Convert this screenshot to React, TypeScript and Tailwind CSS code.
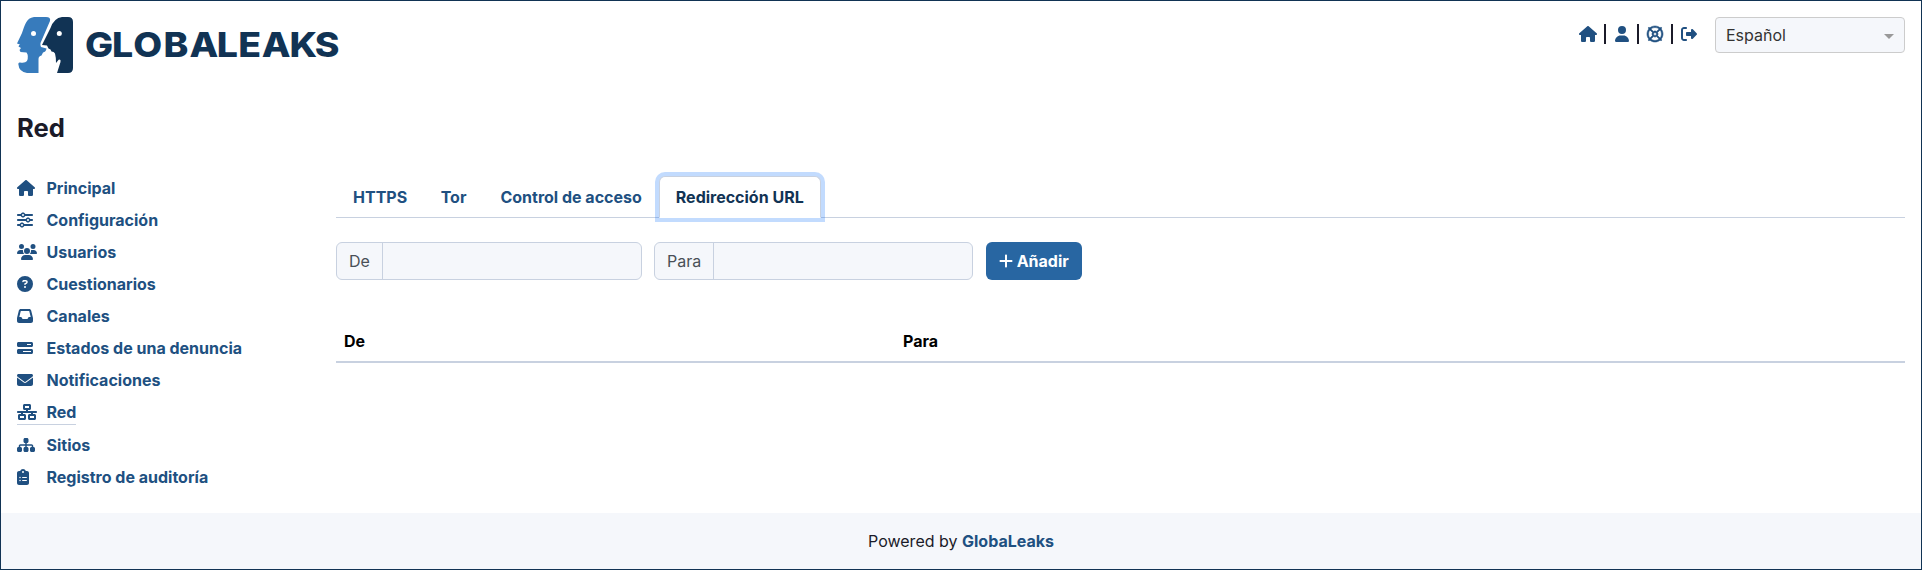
import React from "react";
import {
  FaHouse, FaUser, FaRegLifeRing, FaRightFromBracket, FaSliders, FaUsers, FaCircleQuestion,
  FaInbox, FaBarsProgress, FaEnvelope, FaNetworkWired, FaSitemap, FaClipboardList, FaPlus,
} from "react-icons/fa6";

const menu = [
  { label: "Principal", Icon: FaHouse, size: "h-4 w-[18px]" },
  { label: "Configuración", Icon: FaSliders, size: "size-4" },
  { label: "Usuarios", Icon: FaUsers, size: "h-4 w-5" },
  { label: "Cuestionarios", Icon: FaCircleQuestion, size: "size-4" },
  { label: "Canales", Icon: FaInbox, size: "size-4" },
  { label: "Estados de una denuncia", Icon: FaBarsProgress, size: "size-4" },
  { label: "Notificaciones", Icon: FaEnvelope, size: "size-4" },
  { label: "Red", Icon: FaNetworkWired, size: "h-4 w-5", active: true },
  { label: "Sitios", Icon: FaSitemap, size: "h-4 w-[18px]" },
  { label: "Registro de auditoría", Icon: FaClipboardList, size: "h-4 w-3" },
];

function Logo() {
  return (
    <svg width="330" height="56" viewBox="0 0 330 56" className="block">
      <path fill="#377bbc" d="M17 0H29Q34 0 33 4L23.500 26Q23 28 24 30L29.500 31.500Q29 35 26 35.500L24.500 38.500Q21.500 39 21.500 42V56H10Q2 55 1.300 47Q1.500 45 3 45.500Q8 46.500 10 44Q12 39 9.500 35.500L3.500 35L2.500 33L4 31L1.500 29.500Q2 28 3 27.500L0 26.500L5 16C8 8 9 1 17 0Z" />
      <path fill="#113354" d="M45 0H51Q56 0 56 5V51Q56 56 51 56H40L43.500 45V43Q42 42 41 43.500L39 46Q39 40 38 36.500Q37 34.500 34.500 34.500L33.500 32.500L31.500 31.500L30 28.500L25 28L33.500 11Q37 1 45 0Z" />
      <circle cx="16.500" cy="16.500" r="2.500" fill="#fff" />
      <circle cx="42.300" cy="16.500" r="2.500" fill="#fff" />
      <text transform="scale(1.1 1)" x="61.900 86.300 105.800 133.300 156.900 181.700 201.200 222.600 247.800 270.700" y="40" fill="#113354" className="font-['Inter',sans-serif] text-[34px] font-extrabold">GLOBALEAKS</text>
    </svg>
  );
}

function Separator() {
  return <span className="h-5 w-[2px] bg-[#1b1b29]" />;
}

function Field({ label, className }: { label: string; className: string }) {
  return (
    <label className={`flex h-[38px] overflow-hidden rounded-md border border-[#c8d1e0] bg-[#f5f7fb] ${className}`}>
      <span className="flex items-center border-r border-[#c8d1e0] px-3 text-[#495057]">{label}</span>
      <input className="min-w-0 flex-1 bg-transparent outline-none" />
    </label>
  );
}

export default function App() {
  return (
    <div className="flex h-[570px] w-full flex-col border border-[#113354] bg-white font-['Inter',sans-serif] text-base text-[#1b1b29]">
      <header className="flex h-[94px] items-start justify-between px-4 pt-4">
        <Logo />
        <div className="flex items-start">
          <nav className="mr-[18px] mt-[7px] flex h-5 items-center text-[#205081]">
            <a className="mr-[7px]"><FaHouse className="h-4 w-[18px]" /></a>
            <Separator />
            <a className="mx-2 pl-px"><FaUser className="h-4 w-[14px]" /></a>
            <Separator />
            <a className="mx-2"><FaRegLifeRing className="size-4 overflow-visible stroke-current stroke-[18px]" /></a>
            <Separator />
            <a className="ml-2"><FaRightFromBracket className="size-4" /></a>
          </nav>
          <button className="flex h-9 w-[190px] items-center justify-between rounded border border-[#ccc] bg-[#f5f7fb] px-[10px] text-[#333]">
            <span>Español</span>
            <span className="mt-[3px] border-x-[5px] border-t-[5px] border-x-transparent border-t-[#999]" />
          </button>
        </div>
      </header>
      <h1 className="ml-4 mt-[18px] h-[30px] text-[25.6px] leading-[30px] font-bold">Red</h1>
      <div className="flex flex-1 px-4 pt-[33px]">
        <aside className="w-[319px] shrink-0">
          <ul className="flex flex-col items-start gap-2 font-bold text-[#205081]">
            {menu.map(({ label, Icon, size, active }) => (
              <li key={label} className={active ? "flex border-b border-[#c8d1e0]" : "flex"}>
                <a className="flex h-6 items-center">
                  <span className="flex w-[29.5px]"><Icon className={size} /></span>
                  {label}
                </a>
              </li>
            ))}
          </ul>
        </aside>
        <main className="flex-1">
          <div className="flex h-[42px] items-end border-b border-[#c8d1e0] font-bold text-[#205081]">
            <a className="py-2 pr-[16.5px] pl-[17px]">HTTPS</a>
            <a className="px-[17px] py-2">Tor</a>
            <a className="py-2 pr-[17px] pl-[17px]">Control de acceso</a>
            <a className="-mb-px rounded-t-md border border-b-white border-[#c8d1e0] bg-white px-4 py-2 text-[#113354] shadow-[0_0_0_4px_rgba(13,110,253,0.25)]">Redirección URL</a>
          </div>
          <div className="mt-6 flex">
            <Field label="De" className="w-[306px]" />
            <Field label="Para" className="ml-3 w-[319px]" />
            <button className="ml-[13px] flex h-[38px] w-24 items-center justify-center gap-[3.5px] rounded-md bg-[#2866a2] font-bold text-white">
              <FaPlus className="h-4 w-[14px]" />
              Añadir
            </button>
          </div>
          <div className="mt-[41px] flex h-[42px] items-center border-b-2 border-[#c8d1e0] font-bold text-black">
            <div className="w-[559px] pl-2">De</div>
            <div className="pl-2">Para</div>
          </div>
        </main>
      </div>
      <footer className="flex h-14 items-center justify-center bg-[#f5f7fb]">
        <span>Powered by <a className="font-bold text-[#205081]">GlobaLeaks</a></span>
      </footer>
    </div>
  );
}
